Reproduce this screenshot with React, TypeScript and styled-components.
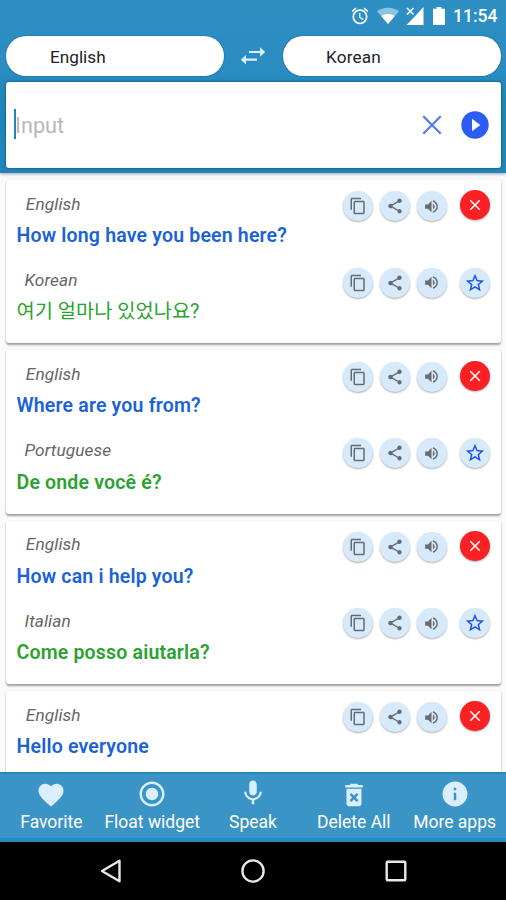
import React from 'react';
import styled, { createGlobalStyle } from 'styled-components';

const GlobalStyle = createGlobalStyle`
  *, *::before, *::after { box-sizing: border-box; }
  body { margin: 0; background: #fafafa; }
  svg { display: block; flex: none; }
  button { border: 0; padding: 0; margin: 0; background: none; font: inherit; color: inherit; }
`;

const Screen = styled.div`
  width: 506px;
  height: 900px;
  display: flex;
  flex-direction: column;
  overflow: hidden;
  background: #fafafa;
  font-family: Roboto, 'Noto Sans CJK KR', sans-serif;
`;

const Header = styled.header`
  position: relative;
  z-index: 1;
  flex: none;
  height: 173px;
  padding: 0 5px 0 6px;
  background: linear-gradient(#2e8fc3 0, #2a8cc0 70px, #2086ba 100px, #2086ba 100%);
  box-shadow: 0 1px 3px rgba(0, 0, 0, 0.35);
`;

const StatusBar = styled.div`
  height: 35px;
  display: flex;
  align-items: center;
  justify-content: flex-end;
  padding: 0 4px 4px 0;
  color: #fff;
`;

const Clock = styled.span`
  width: 44px;
  margin-left: 8px;
  font-size: 17.5px;
  line-height: 20px;
  font-weight: 500;
  white-space: nowrap;
`;

const StatusIcon = styled.span<{ $gap: number }>`
  margin-left: ${(p) => p.$gap}px;
`;

const LanguageRow = styled.div`
  display: flex;
  align-items: center;
  height: 41px;
`;

const LanguagePill = styled.button`
  width: 218px;
  height: 40px;
  margin-top: 1px;
  padding: 1px 0 0 44px;
  border-radius: 21px;
  background: #fff;
  box-shadow: 0 0 2px rgba(0, 70, 110, 0.5);
  color: #222;
  font-size: 17.2px;
  line-height: 22px;
  text-align: left;

  & + button + & {
    padding-left: 43px;
    letter-spacing: 0.15px;
  }
`;

const SwapButton = styled.button`
  width: 59px;
  padding-right: 2px;
  display: flex;
  justify-content: center;
`;

const InputCard = styled.div`
  height: 86px;
  margin-top: 6px;
  padding: 0 12px 0 8px;
  display: flex;
  align-items: center;
  border-radius: 3px;
  background: #fff;
  box-shadow: 0 0 3px rgba(0, 50, 85, 0.75);
`;

const Caret = styled.span`
  width: 2px;
  height: 30px;
  margin-top: -2px;
  background: #2086ba;
`;

const Placeholder = styled.span`
  flex: 1;
  margin-top: 2px;
  margin-left: -1px;
  color: #b8b8b8;
  font-size: 21.7px;
  line-height: 28px;
`;

const InputAction = styled.button`
  margin-left: 15px;
`;

const History = styled.main`
  flex: 1;
  min-height: 0;
  overflow: hidden;
  padding: 7px 5px 0 6px;
`;

const Card = styled.article`
  height: 163.3px;
  margin-bottom: 7px;
  padding: 10.7px 11.3px 0 10.5px;
  border-radius: 3px;
  background: #fff;
  box-shadow: 0 1.5px 2px rgba(0, 0, 0, 0.36), 0 0 1px rgba(0, 0, 0, 0.06);
`;

const Entry = styled.section`
  display: flex;
  justify-content: space-between;
  height: 76.4px;
`;

const LanguageLabel = styled.div<{ $target?: boolean }>`
  padding-left: ${(p) => (p.$target ? 8 : 9.3)}px;
  color: #666;
  font-size: 17.3px;
  font-style: italic;
  letter-spacing: 0.08px;
  line-height: 26px;
`;

const Phrase = styled.div<{ $target?: boolean; $korean?: boolean }>`
  margin-top: ${(p) => (p.$korean ? 5.5 : 6.3)}px;
  color: ${(p) => (p.$target ? '#2ba22f' : '#1b62d6')};
  font-size: ${(p) => (p.$korean ? 19.8 : 19.5)}px;
  font-weight: ${(p) => (p.$korean ? 400 : 600)};
  letter-spacing: ${(p) => (p.$korean ? 0 : 0.18)}px;
  line-height: 26px;
  white-space: nowrap;
`;

const Actions = styled.div`
  display: flex;
  align-items: center;
  gap: 7px;
  height: 31.4px;
`;

const RoundButton = styled.button<{ $kind?: 'delete' | 'star' }>`
  width: 30px;
  height: 30px;
  display: flex;
  align-items: center;
  justify-content: center;
  border-radius: 50%;
  margin-left: ${(p) => (p.$kind ? 6 : 0)}px;
  margin-bottom: ${(p) => (p.$kind === 'delete' ? 2 : 0)}px;
  background: ${(p) => (p.$kind === 'delete' ? '#fb2024' : '#d6eafb')};
  color: ${(p) => (p.$kind === 'delete' ? '#fff' : p.$kind === 'star' ? '#1c50e8' : '#686c70')};
  box-shadow: 0 1px 2px rgba(0, 0, 0, 0.32);
`;

const TabBar = styled.nav`
  position: relative;
  flex: none;
  height: 70.5px;
  padding: 0 1px;
  display: grid;
  grid-template-columns: repeat(5, 1fr);
  background: #3a94c5;
  border-top: 2px solid #2587ba;
  border-bottom: 4px solid #2a8abd;
`;

const Tab = styled.button`
  display: flex;
  flex-direction: column;
  align-items: center;
  justify-content: flex-start;
  padding-top: 4px;
  color: #fff;
  font-size: 17.5px;
  line-height: 22px;
  white-space: nowrap;
`;

const TabIcon = styled.span<{ $raise?: number }>`
  height: 33px;
  color: #d9eeff;
  padding-top: ${(p) => 2.5 - (p.$raise ?? 0)}px;
`;

const SystemNav = styled.nav`
  flex: none;
  height: 58px;
  display: grid;
  grid-template-columns: 182px 102px 184px;
  align-items: center;
  padding-left: 20px;
  background: #000;
`;

const NavButton = styled.button`
  display: flex;
  justify-content: center;
`;

const P = {
  alarm:
    'M22 5.72l-4.6-3.86-1.29 1.53 4.6 3.86L22 5.72zM7.88 3.39L6.6 1.86 2 5.71l1.29 1.53 4.59-3.85zM12.5 8H11v6l4.75 2.85.75-1.23-4-2.37V8zM12 4c-4.97 0-9 4.03-9 9s4.02 9 9 9c4.97 0 9-4.03 9-9s-4.03-9-9-9zm0 16c-3.87 0-7-3.13-7-7s3.13-7 7-7 7 3.13 7 7-3.13 7-7 7z',
  copy: 'M16 1H4c-1.1 0-2 .9-2 2v14h2V3h12V1zm3 4H8c-1.1 0-2 .9-2 2v14c0 1.1.9 2 2 2h11c1.1 0 2-.9 2-2V7c0-1.1-.9-2-2-2zm0 16H8V7h11v14z',
  share:
    'M18 16.08c-.76 0-1.44.3-1.96.77L8.91 12.7c.05-.23.09-.46.09-.7s-.04-.47-.09-.7l7.05-4.11c.54.5 1.25.81 2.04.81 1.66 0 3-1.34 3-3s-1.34-3-3-3-3 1.34-3 3c0 .24.04.47.09.7L8.04 9.81C7.5 9.31 6.79 9 6 9c-1.66 0-3 1.34-3 3s1.34 3 3 3c.79 0 1.5-.31 2.04-.81l7.12 4.16c-.05.21-.08.43-.08.65 0 1.61 1.31 2.92 2.92 2.92 1.61 0 2.92-1.31 2.92-2.92s-1.31-2.92-2.92-2.92z',
  volume:
    'M3 9v6h4l5 5V4L7 9H3zm13.5 3c0-1.77-1.02-3.29-2.5-4.03v8.05c1.48-.73 2.5-2.25 2.5-4.02zM14 3.23v2.06c2.89.86 5 3.54 5 6.71s-2.11 5.85-5 6.71v2.06c4.01-.91 7-4.49 7-8.77s-2.99-7.86-7-8.77z',
  close:
    'M19 6.41L17.59 5 12 10.59 6.41 5 5 6.41 10.59 12 5 17.59 6.41 19 12 13.41 17.59 19 19 17.59 13.41 12z',
  star: 'M22 9.24l-7.19-.62L12 2 9.19 8.63 2 9.24l5.46 4.73L5.82 21 12 17.27 18.18 21l-1.63-7.03L22 9.24zM12 15.4l-3.76 2.27 1-4.28-3.32-2.88 4.38-.38L12 6.1l1.71 4.04 4.38.38-3.32 2.88 1 4.28L12 15.4z',
  heart:
    'M12 21.35l-1.45-1.32C5.4 15.36 2 12.28 2 8.5 2 5.42 4.42 3 7.5 3c1.74 0 3.41.81 4.5 2.09C13.09 3.81 14.76 3 16.5 3 19.58 3 22 5.42 22 8.5c0 3.78-3.4 6.86-8.55 11.54L12 21.35z',
  record:
    'M12 7c-2.76 0-5 2.24-5 5s2.24 5 5 5 5-2.24 5-5-2.24-5-5-5zm0-5C6.48 2 2 6.48 2 12s4.48 10 10 10 10-4.48 10-10S17.52 2 12 2zm0 18c-4.42 0-8-3.58-8-8s3.58-8 8-8 8 3.58 8 8-3.58 8-8 8z',
  mic: 'M12 14c1.66 0 2.99-1.34 2.99-3L15 5c0-1.66-1.34-3-3-3S9 3.34 9 5v6c0 1.66 1.34 3 3 3zm5.3-3c0 3-2.54 5.1-5.3 5.1S6.7 14 6.7 11H5c0 3.41 2.72 6.23 6 6.72V21h2v-3.28c3.28-.48 6-3.3 6-6.72h-1.7z',
  trash:
    'M6 19c0 1.1.9 2 2 2h8c1.1 0 2-.9 2-2V7H6v12zm2.46-7.12l1.41-1.41L12 12.59l2.12-2.12 1.41 1.41L13.41 14l2.12 2.12-1.41 1.41L12 15.41l-2.12 2.12-1.41-1.41L10.59 14l-2.13-2.12zM15.5 4l-1-1h-5l-1 1H5v2h14V4z',
  info: 'M12 2C6.48 2 2 6.48 2 12s4.48 10 10 10 10-4.48 10-10S17.52 2 12 2zm1 15h-2v-6h2v6zm0-8h-2V7h2v2z',
};

function Icon({ path, size }: { path: string; size: number }) {
  return (
    <svg width={size} height={size} viewBox="0 0 24 24" fill="currentColor" aria-hidden>
      <path fillRule="evenodd" d={path} />
    </svg>
  );
}

interface EntryProps {
  language: string;
  phrase: string;
  target?: boolean;
}

function PhraseEntry({ language, phrase, target }: EntryProps) {
  return (
    <Entry>
      <div>
        <LanguageLabel $target={target}>{language}</LanguageLabel>
        <Phrase $target={target} $korean={language === 'Korean'}>{phrase}</Phrase>
      </div>
      <Actions>
        <RoundButton aria-label="Copy"><Icon path={P.copy} size={18} /></RoundButton>
        <RoundButton aria-label="Share"><Icon path={P.share} size={18} /></RoundButton>
        <RoundButton aria-label="Listen"><Icon path={P.volume} size={17} /></RoundButton>
        {target ? (
          <RoundButton $kind="star" aria-label="Favorite"><Icon path={P.star} size={22} /></RoundButton>
        ) : (
          <RoundButton $kind="delete" aria-label="Delete"><Icon path={P.close} size={18} /></RoundButton>
        )}
      </Actions>
    </Entry>
  );
}

const history = [
  { source: 'How long have you been here?', language: 'Korean', result: '여기 얼마나 있었나요?' },
  { source: 'Where are you from?', language: 'Portuguese', result: 'De onde você é?' },
  { source: 'How can i help you?', language: 'Italian', result: 'Come posso aiutarla?' },
  { source: 'Hello everyone' },
];

const tabs = [
  { label: 'Favorite', path: P.heart, size: 30, raise: 0.5 },
  { label: 'Float widget', path: P.record, size: 30, raise: 1 },
  { label: 'Speak', path: P.mic, size: 30, raise: 2.5 },
  { label: 'Delete All', path: P.trash, size: 30, raise: 0.5 },
  { label: 'More apps', path: P.info, size: 30, raise: 1 },
];

export default function App() {
  return (
    <Screen>
      <GlobalStyle />
      <Header>
        <StatusBar>
          <StatusIcon $gap={0}><Icon path={P.alarm} size={20} /></StatusIcon>
          <StatusIcon $gap={7}>
            <svg width="22" height="17" viewBox="0 0 22 17">
              <path d="M0 4.3C6 -.6 16 -.6 22 4.3L11 17z" fill="#8cc4e2" />
              <path d="M4.2 9.1Q11 4.7 17.8 9.1L11 17z" fill="#fff" />
            </svg>
          </StatusIcon>
          <StatusIcon $gap={7}>
            <svg width="18" height="18" viewBox="0 0 18 18">
              <path d="M17.5 0v18H.5L8 10.3 17.5 0z" fill="#fff" />
              <path d="M1 1l6.5 6.5M7.5 1L1 7.5" stroke="#fff" strokeWidth="1.6" />
            </svg>
          </StatusIcon>
          <StatusIcon $gap={9}>
            <svg width="12" height="18" viewBox="0 0 12 18">
              <path d="M3.5 0h5v1.7H12V18H0V1.7h3.5z" fill="#fff" />
            </svg>
          </StatusIcon>
          <Clock>11:54</Clock>
        </StatusBar>
        <LanguageRow>
          <LanguagePill>English</LanguagePill>
          <SwapButton aria-label="Swap languages">
            <svg width="26" height="20" viewBox="0 0 26 20" fill="none" stroke="#d9eeff" strokeWidth="2.2">
              <path d="M9 6h12M17 13.7H5" />
              <path d="M20 1.2v9.6L25.2 6zM6 8.9v9.6L.8 13.7z" fill="#d9eeff" stroke="none" />
            </svg>
          </SwapButton>
          <LanguagePill>Korean</LanguagePill>
        </LanguageRow>
        <InputCard>
          <Caret />
          <Placeholder>Input</Placeholder>
          <InputAction aria-label="Clear">
            <svg width="28" height="28" viewBox="0 0 28 28">
              <path d="M5.3 5.3l17.4 17.4M22.7 5.3L5.3 22.7" stroke="#5577ef" strokeWidth="2.2" />
            </svg>
          </InputAction>
          <InputAction aria-label="Translate">
            <svg width="28" height="28" viewBox="0 0 28 28">
              <circle cx="14" cy="14" r="13.7" fill="#2b5cf5" />
              <path d="M11 7.8v12.4l8.3-6.2z" fill="#fff" />
            </svg>
          </InputAction>
        </InputCard>
      </Header>
      <History>
        {history.map((item) => (
          <Card key={item.source}>
            <PhraseEntry language="English" phrase={item.source} />
            {item.result && <PhraseEntry language={item.language!} phrase={item.result} target />}
          </Card>
        ))}
      </History>
      <TabBar>
        {tabs.map((tab) => (
          <Tab key={tab.label}>
            <TabIcon $raise={tab.raise}><Icon path={tab.path} size={tab.size} /></TabIcon>
            {tab.label}
          </Tab>
        ))}
      </TabBar>
      <SystemNav>
        <NavButton aria-label="Back">
          <svg width="24" height="26" viewBox="0 0 24 26">
            <path d="M20.5 2.8v20.4L3 13z" fill="none" stroke="#e8e8e8" strokeWidth="2.4" strokeLinejoin="round" />
          </svg>
        </NavButton>
        <NavButton aria-label="Home">
          <svg width="26" height="26" viewBox="0 0 26 26">
            <circle cx="13" cy="13" r="10.6" fill="none" stroke="#e8e8e8" strokeWidth="2.4" />
          </svg>
        </NavButton>
        <NavButton aria-label="Recent apps">
          <svg width="22" height="22" viewBox="0 0 22 22">
            <rect x="1.7" y="1.7" width="18.6" height="18.6" rx="1" fill="none" stroke="#e8e8e8" strokeWidth="2.4" />
          </svg>
        </NavButton>
      </SystemNav>
    </Screen>
  );
}
